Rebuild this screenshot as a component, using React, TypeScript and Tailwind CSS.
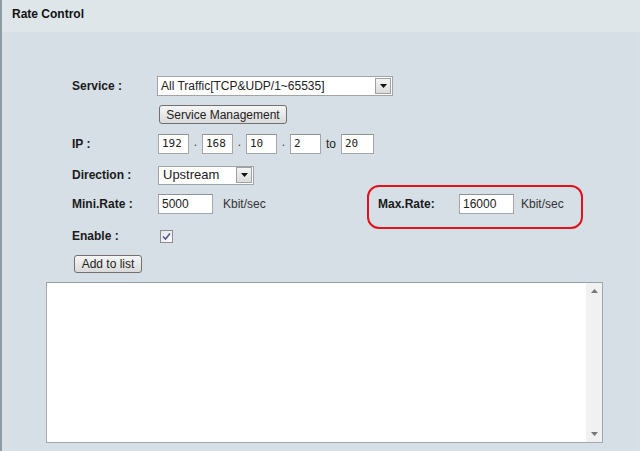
import React from "react";

function Arrow() {
  return (
    <div className="w-[16px] h-[16px] mr-[1px] border border-[#a0a0a0] bg-gradient-to-b from-[#f4f4f4] to-[#dcdcdc] flex items-center justify-center">
      <svg width="7" height="4" viewBox="0 0 7 4">
        <path d="M0 0 L7 0 L3.5 4 Z" fill="#111" />
      </svg>
    </div>
  );
}

function Input({ w, value, mono }: { w: string; value: string; mono?: boolean }) {
  return (
    <div
      className={`${w} h-[20px] bg-white border border-[#a3a6aa] border-t-[#8f9296] flex items-center pl-[3px] ${
        mono ? "font-['DejaVu_Sans_Mono',monospace] text-[11px]" : "text-[12px]"
      } text-[#222]`}
    >
      {value}
    </div>
  );
}

function Sep() {
  return <div className="w-[13px] h-[20px] flex items-end justify-center pb-[3px] text-[12px] text-[#333]">.</div>;
}

export default function App() {
  return (
    <div className="w-[640px] h-[451px] bg-[#d9e0e6] border-l-2 border-[#8e9ba6] font-['Liberation_Sans',Arial,sans-serif] text-[12px] text-[#1a1a1a] overflow-hidden flex flex-col">
      <div className="h-[32px] bg-[#dfe6ea] pl-[10px] pt-[7px] leading-[14px] font-bold text-[12px] text-[#111]">
        Rate Control
      </div>
      <div className="flex-1 ml-[10px] mr-[4px] bg-[#d6dee6] pt-[44px] pl-[34px]">
        <div className="pl-[26px]">
          {/* Service */}
          <div className="flex items-center h-[20px]">
            <div className="w-[85px] font-bold">Service :</div>
            <div className="w-[236px] h-[20px] bg-white border border-[#a0a4a8] flex items-center justify-between">
              <span className="pl-[3px] text-[12px] text-[#222]">All Traffic[TCP&amp;UDP/1~65535]</span>
              <Arrow />
            </div>
          </div>
          {/* Service Management */}
          <div className="flex mt-[9px] h-[20px]">
            <div className="ml-[87px] w-[128px] h-[19px] border border-[#707070] rounded-[3px] bg-gradient-to-b from-[#f6f6f6] to-[#dadada] flex items-center justify-center text-[12px] text-[#222]">
              Service Management
            </div>
          </div>
          {/* IP */}
          <div className="flex items-center h-[20px] mt-[9px]">
            <div className="w-[86px] font-bold">IP :</div>
            <Input w="w-[31px]" value="192" mono />
            <Sep />
            <Input w="w-[31px]" value="168" mono />
            <Sep />
            <Input w="w-[31px]" value="10" mono />
            <Sep />
            <Input w="w-[31px]" value="2" mono />
            <div className="w-[20px] text-center text-[12px] text-[#222]">to</div>
            <Input w="w-[33px]" value="20" mono />
          </div>
          {/* Direction */}
          <div className="flex items-center h-[20px] mt-[11px]">
            <div className="w-[86px] font-bold">Direction :</div>
            <div className="w-[96px] h-[19px] bg-white border border-[#a0a4a8] flex items-center justify-between">
              <span className="pl-[4px] text-[13px] text-[#222]">Upstream</span>
              <Arrow />
            </div>
          </div>
          {/* Mini / Max Rate */}
          <div className="flex items-center h-[20px] mt-[9px]">
            <div className="w-[306px] flex items-center">
              <div className="w-[86px] font-bold">Mini.Rate :</div>
              <Input w="w-[55px]" value="5000" />
              <div className="ml-[10px] text-[#333]">Kbit/sec</div>
            </div>
            <div className="relative flex items-center">
              <div className="absolute left-[-11px] top-[-9px] w-[216px] h-[44px] border-2 border-[#e1121c] rounded-[12px]" />
              <div className="w-[81px] font-bold">Max.Rate:</div>
              <Input w="w-[55px]" value="16000" />
              <div className="ml-[7px] text-[#333]">Kbit/sec</div>
            </div>
          </div>
          {/* Enable */}
          <div className="flex items-center h-[14px] mt-[15px]">
            <div className="w-[88px] font-bold">Enable :</div>
            <div className="w-[13px] h-[13px] border border-[#8a8c8e] bg-gradient-to-br from-[#e4e6ea] to-[#fbfbfb] flex items-center justify-center">
              <svg width="9" height="9" viewBox="0 0 9 9">
                <path d="M1 4.5 L3.5 7 L8 1.5" stroke="#4b5b8e" strokeWidth="1.6" fill="none" />
              </svg>
            </div>
          </div>
          {/* Add to list */}
          <div className="flex mt-[12px]">
            <div className="ml-[2px] w-[68px] h-[18px] border border-[#707070] rounded-[3px] bg-gradient-to-b from-[#f6f6f6] to-[#dadada] flex items-center justify-center text-[12px] text-[#222]">
              Add to list
            </div>
          </div>
        </div>
        {/* Textarea */}
        <div className="mt-[9px] w-[557px] h-[161px] bg-white border border-[#a3a8ad] border-t-[#9a9fa4] flex justify-end">
          <div className="w-[16px] h-full bg-[#f1f1f1] flex flex-col items-center justify-between py-[6px]">
            <svg width="7" height="4" viewBox="0 0 7 4">
              <path d="M0 4 L7 4 L3.5 0 Z" fill="#777" />
            </svg>
            <svg width="7" height="4" viewBox="0 0 7 4">
              <path d="M0 0 L7 0 L3.5 4 Z" fill="#777" />
            </svg>
          </div>
        </div>
      </div>
    </div>
  );
}
